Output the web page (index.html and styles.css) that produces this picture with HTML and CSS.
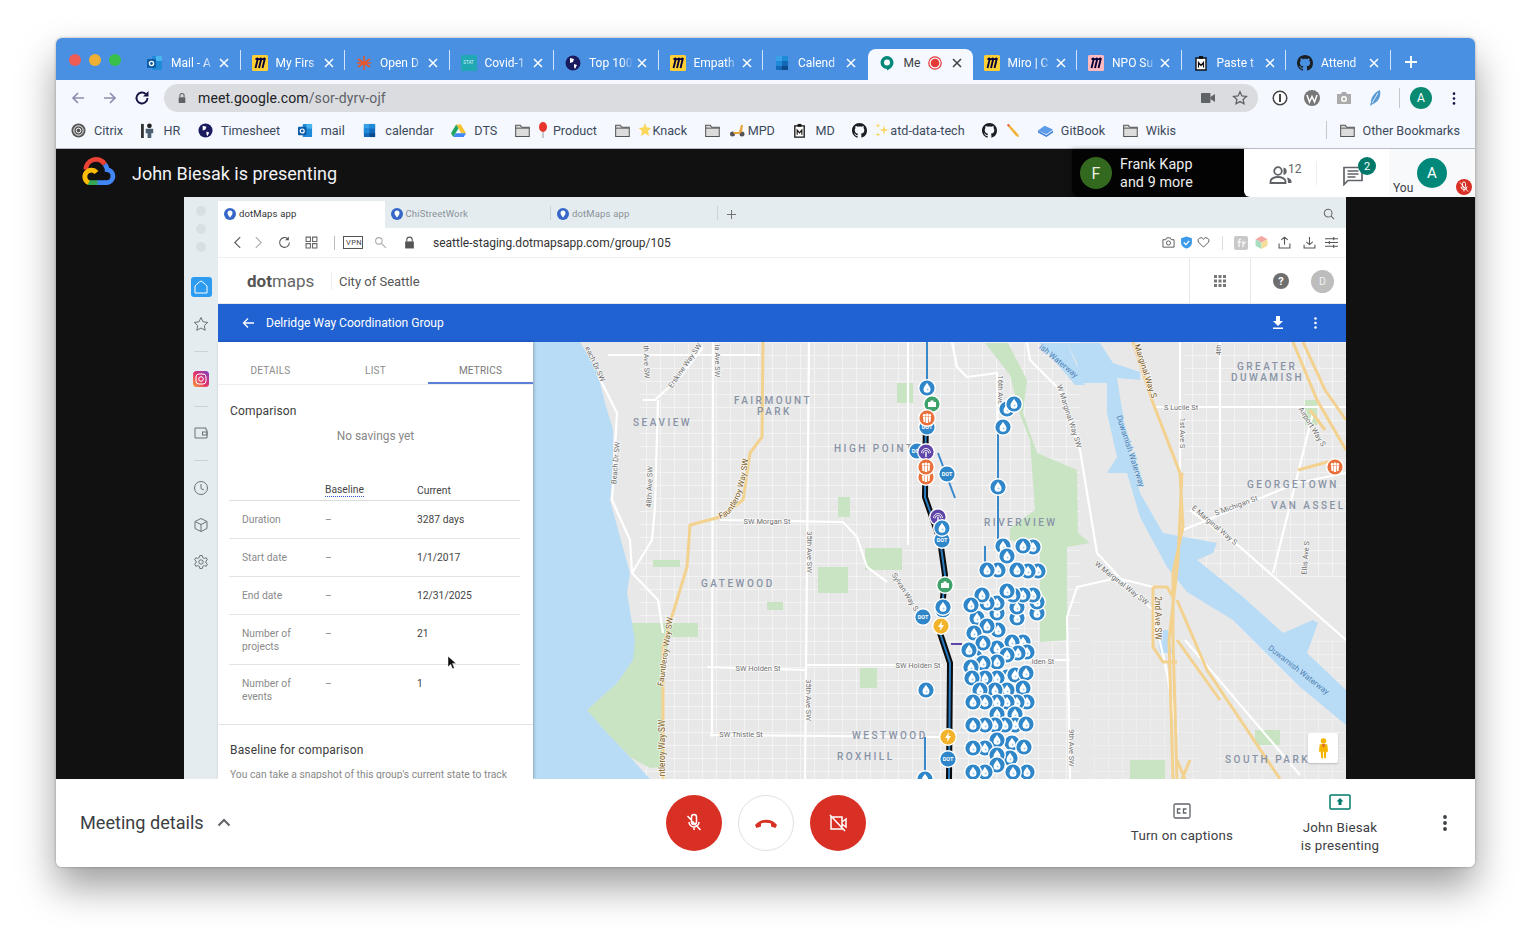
FILE: index.html
```html
<!DOCTYPE html>
<html lang="en">
<head>
<meta charset="utf-8">
<title>Meet</title>
<link rel="stylesheet" href="styles.css">
</head>
<body>
<svg class="defs" aria-hidden="true">
  <symbol id="x" viewBox="0 0 12 12"><path d="M2 2l8 8M10 2l-8 8" fill="none" stroke="currentColor" stroke-width="1.5"/></symbol>
  <symbol id="outlook" viewBox="0 0 16 16"><rect x="5" y="1" width="10" height="14" rx="1" fill="#1f8ad8"/><rect x="9" y="1" width="6" height="5" fill="#49b4ee"/><rect x="0" y="4" width="9" height="9" rx="1" fill="#0d5ca8"/><circle cx="4.5" cy="8.5" r="2.1" fill="none" stroke="#fff" stroke-width="1.3"/></symbol>
  <symbol id="miro" viewBox="0 0 16 16"><rect width="16" height="16" rx="1.5" fill="#ffcf33"/><path d="M6 3L3.500 13M9.500 3L7 13M13 3L10.500 13M3.500 4.500L6 3M7 4.500L9.500 3M10.500 4.500L13 3" fill="none" stroke="#050038" stroke-width="1.900"/></symbol>
  <symbol id="miropink" viewBox="0 0 16 16"><rect width="16" height="16" rx="1.5" fill="#ffb9bf"/><path d="M6 3L3.500 13M9.500 3L7 13M13 3L10.500 13M3.500 4.500L6 3M7 4.500L9.500 3M10.500 4.500L13 3" fill="none" stroke="#050038" stroke-width="1.900"/></symbol>
  <symbol id="burst" viewBox="0 0 16 16"><path d="M8 1v14M2 4l12 8M14 4L2 12M1 8h14" stroke="#e4572e" stroke-width="1.6"/></symbol>
  <symbol id="globe" viewBox="0 0 16 16"><circle cx="8" cy="8" r="7.5" fill="#1a1a5e"/><path d="M5 3l4 1-1 3-3 1zM9 9l3 1-2 4-1-2z" fill="#fff"/></symbol>
  <symbol id="cal" viewBox="0 0 16 16"><rect x="2" y="1" width="12" height="14" rx="1" fill="#1468b8"/><rect x="2" y="1" width="6" height="5" fill="#3aa0e8"/><rect x="8" y="1" width="6" height="5" fill="#1f8ad8"/><rect x="2" y="6" width="6" height="5" fill="#1f8ad8"/><rect x="8" y="11" width="6" height="4" fill="#0d4a8c"/></symbol>
  <symbol id="clip" viewBox="0 0 16 16"><path d="M3 3h10v12H3z" fill="#fff" stroke="#111" stroke-width="1.4"/><rect x="6" y="1" width="4" height="3" fill="#111"/><path d="M5.500 12.500v-5l2.500 3 2.500-3v5" fill="none" stroke="#111" stroke-width="1.200"/></symbol>
  <symbol id="gh" viewBox="0 0 16 16"><path fill="#1b1f23" d="M8 0C3.58 0 0 3.58 0 8c0 3.54 2.29 6.53 5.47 7.59.4.07.55-.17.55-.38 0-.19-.01-.82-.01-1.49-2.01.37-2.53-.49-2.69-.94-.09-.23-.48-.94-.82-1.13-.28-.15-.68-.52-.01-.53.63-.01 1.08.58 1.23.82.72 1.21 1.87.87 2.33.66.07-.52.28-.87.51-1.07-1.78-.2-3.64-.89-3.64-3.95 0-.87.31-1.59.82-2.15-.08-.2-.36-1.02.08-2.12 0 0 .67-.21 2.2.82.64-.18 1.32-.27 2-.27.68 0 1.36.09 2 .27 1.53-1.04 2.2-.82 2.2-.82.44 1.1.16 1.92.08 2.12.51.56.82 1.27.82 2.15 0 3.07-1.87 3.75-3.65 3.95.29.25.54.73.54 1.48 0 1.07-.01 1.93-.01 2.2 0 .21.15.46.55.38A8.013 8.013 0 0016 8c0-4.42-3.58-8-8-8z"/></symbol>
  <symbol id="folder" viewBox="0 0 16 16"><path d="M.7 2.500h5l1.500 2h8v9.800H.7z" fill="#dcdcdc" stroke="#555" stroke-width="1.100"/><path d="M.7 5.500h14.500" stroke="#555" stroke-width="1"/></symbol>
  <symbol id="pindot" viewBox="0 0 12 12"><circle cx="6" cy="6" r="6" fill="#3566c8"/><path d="M6 2.500a2.500 2.500 0 0 1 2.500 2.500C8.500 7 6 9.500 6 9.500S3.500 7 3.500 5A2.500 2.500 0 0 1 6 2.500z" fill="#fff"/></symbol>
</svg>

<main class="window">
  <header class="tabstrip">
    <div class="lights"><i class="light red"></i><i class="light amber"></i><i class="light green"></i></div>
    <div class="tab"><svg class="fav"><use href="#outlook"/></svg><span class="tname">Mail - A</span><svg class="tx"><use href="#x"/></svg></div>
    <div class="tab"><svg class="fav"><use href="#miro"/></svg><span class="tname">My Firs</span><svg class="tx"><use href="#x"/></svg></div>
    <div class="tab"><svg class="fav"><use href="#burst"/></svg><span class="tname">Open D</span><svg class="tx"><use href="#x"/></svg></div>
    <div class="tab"><span class="fav statfav">STAT</span><span class="tname">Covid-1</span><svg class="tx"><use href="#x"/></svg></div>
    <div class="tab"><svg class="fav"><use href="#globe"/></svg><span class="tname">Top 100</span><svg class="tx"><use href="#x"/></svg></div>
    <div class="tab"><svg class="fav"><use href="#miro"/></svg><span class="tname">Empath</span><svg class="tx"><use href="#x"/></svg></div>
    <div class="tab noline"><svg class="fav"><use href="#cal"/></svg><span class="tname">Calend</span><svg class="tx"><use href="#x"/></svg></div>
    <div class="tab active">
      <svg class="fav" viewBox="0 0 16 16"><path d="M8 1a6.500 6.500 0 0 1 6.500 6.500C14.500 11 11.500 14 8 15.500V14A6.500 6.500 0 0 1 8 1z" fill="#00897b"/><circle cx="8" cy="7.500" r="3" fill="#fff"/></svg>
      <span class="tname short">Me</span>
      <svg class="rec" viewBox="0 0 14 14"><circle cx="7" cy="7" r="6.200" fill="none" stroke="#e53935" stroke-width="1.200"/><circle cx="7" cy="7" r="4.300" fill="#e53935"/></svg>
      <svg class="tx"><use href="#x"/></svg>
    </div>
    <div class="tab"><svg class="fav"><use href="#miro"/></svg><span class="tname">Miro | C</span><svg class="tx"><use href="#x"/></svg></div>
    <div class="tab"><svg class="fav"><use href="#miropink"/></svg><span class="tname">NPO Su</span><svg class="tx"><use href="#x"/></svg></div>
    <div class="tab"><svg class="fav"><use href="#clip"/></svg><span class="tname">Paste t</span><svg class="tx"><use href="#x"/></svg></div>
    <div class="tab"><svg class="fav"><use href="#gh"/></svg><span class="tname">Attend</span><svg class="tx"><use href="#x"/></svg></div>
    <svg class="newtab" viewBox="0 0 14 14"><path d="M7 1v12M1 7h12" stroke="#fff" stroke-width="1.800"/></svg>
  </header>

  <nav class="toolbar">
    <svg class="navi" viewBox="0 0 16 16"><path d="M14 8H3M8 3L3 8l5 5" fill="none" stroke="#8d8fb0" stroke-width="1.700"/></svg>
    <svg class="navi" viewBox="0 0 16 16"><path d="M2 8h11M8 3l5 5-5 5" fill="none" stroke="#8d8fb0" stroke-width="1.700"/></svg>
    <svg class="navi" viewBox="0 0 16 16"><path d="M13.500 8a5.500 5.500 0 1 1-1.600-3.900" fill="none" stroke="#1a1446" stroke-width="1.900"/><path d="M14.500 1v5.500H9z" fill="#1a1446"/></svg>
    <div class="omnibox">
      <svg class="lock" viewBox="0 0 12 14"><path d="M3.500 6V4a2.500 2.500 0 0 1 5 0v2" fill="none" stroke="#5f6368" stroke-width="1.300"/><rect x="2" y="6" width="8" height="7" rx="1" fill="#5f6368"/></svg>
      <span class="url">meet.google.com<span class="urlpath">/sor-dyrv-ojf</span></span>
      <svg class="cam" viewBox="0 0 14 10"><rect width="9.500" height="10" rx="1" fill="#5f6368"/><path d="M9.500 4L14 1v8L9.500 6z" fill="#5f6368"/></svg>
      <svg class="star" viewBox="0 0 16 16"><path d="M8 1.800l1.900 4.100 4.500.5-3.300 3 .9 4.400L8 11.600l-4 2.200.9-4.400-3.300-3 4.500-.5z" fill="none" stroke="#5f6368" stroke-width="1.300"/></svg>
    </div>
    <div class="exts">
      <svg class="ext" viewBox="0 0 16 16"><circle cx="8" cy="8" r="6.800" fill="#fff" stroke="#444" stroke-width="1.500"/><rect x="7" y="4" width="2" height="8" fill="#444"/></svg>
      <svg class="ext" viewBox="0 0 16 16"><circle cx="8" cy="8" r="8" fill="#777"/><path d="M3 5l2.500 7L8 6.500l2.500 5.500L13 5" fill="none" stroke="#fff" stroke-width="1.500"/></svg>
      <svg class="ext" viewBox="0 0 16 16"><path d="M1 4h4l1-2h4l1 2h4v10H1z" fill="#aaa"/><circle cx="8" cy="9" r="3" fill="#fff"/><circle cx="8" cy="9" r="1.500" fill="#aaa"/></svg>
      <svg class="ext" viewBox="0 0 16 16"><path d="M12 0c1 5 0 11-7 14l-3 2 1-4C3 7 7 2 12 0z" fill="#5b9bd5"/><path d="M10 3L4 13" stroke="#fff" stroke-width=".8"/></svg>
      <i class="tsep"></i>
      <span class="avatar-a">A</span>
      <svg class="tdots" viewBox="0 0 4 16"><circle cx="2" cy="2" r="1.600"/><circle cx="2" cy="8" r="1.600"/><circle cx="2" cy="14" r="1.600"/></svg>
    </div>
  </nav>

  <nav class="bookmarks">
    <a class="bm"><svg class="bi" viewBox="0 0 16 16"><circle cx="8" cy="8" r="7.500" fill="#555"/><circle cx="8" cy="8" r="5" fill="none" stroke="#fff" stroke-width="1"/><circle cx="8" cy="8" r="2.500" fill="none" stroke="#fff" stroke-width="1"/></svg>Citrix</a>
    <a class="bm"><svg class="bi" viewBox="0 0 16 16"><rect x="0" y="1" width="3" height="15" fill="#333"/><circle cx="9" cy="3" r="2.500" fill="#222"/><path d="M5 6h8v5h-2v5H7v-5H5z" fill="#4b5f73"/></svg>HR</a>
    <a class="bm"><svg class="bi"><use href="#globe"/></svg>Timesheet</a>
    <a class="bm"><svg class="bi"><use href="#outlook"/></svg>mail</a>
    <a class="bm"><svg class="bi"><use href="#cal"/></svg>calendar</a>
    <a class="bm"><svg class="bi" viewBox="0 0 16 16"><path d="M5.500 1.500h5L16 11h-5z" fill="#f7c32e"/><path d="M5.500 1.500L0 11l2.500 4 5.500-9.500z" fill="#1fa463"/><path d="M2.500 15h11l2.500-4H5z" fill="#4285f4"/></svg>DTS</a>
    <a class="bm"><svg class="bi"><use href="#folder"/></svg><svg class="emoji" viewBox="0 0 10 16"><ellipse cx="5" cy="5" rx="4" ry="5" fill="#e8362c"/><path d="M5 10v6" stroke="#999"/></svg>Product</a>
    <a class="bm"><svg class="bi"><use href="#folder"/></svg><svg class="emoji tight" viewBox="0 0 14 16"><path d="M7 1l1.800 4.500L13.500 6 10 9l1 5-4-2.500L3 14l1-5L.5 6l4.700-.5z" fill="#fbd75b"/></svg>Knack</a>
    <a class="bm"><svg class="bi"><use href="#folder"/></svg><svg class="emoji wide" viewBox="0 0 16 14"><circle cx="3.500" cy="11" r="2.500" fill="#555"/><circle cx="13" cy="11" r="2.500" fill="#555"/><path d="M4 9h6l2-7h2l-1 7-3 2H5z" fill="#e8a33c"/></svg>MPD</a>
    <a class="bm"><svg class="bi"><use href="#clip"/></svg>MD</a>
    <a class="bm"><svg class="bi"><use href="#gh"/></svg><svg class="emoji tight" viewBox="0 0 14 16"><path d="M9 3l1 4 4 1-4 1-1 4-1-4-4-1 4-1zM3 1l.6 2 2 .6-2 .6L3 6l-.6-1.800-2-.6 2-.6zM3 10l.6 2 2 .6-2 .6L3 15l-.6-1.800-2-.6 2-.6z" fill="#f6d860"/></svg>atd-data-tech</a>
    <a class="bm"><svg class="bi"><use href="#gh"/></svg><svg class="bi" viewBox="0 0 16 16"><path d="M2 2l2-1 10 11 1 3-3-1z" fill="#f2b23a"/><path d="M2 2l2-1 1.500 1.700-2 1.200z" fill="#e06b5a"/></svg></a>
    <a class="bm"><svg class="bi" viewBox="0 0 16 16"><path d="M0 8l7-5 9 4-7 5z" fill="#5b9bea"/><path d="M0 8v2l9 5 7-5V8l-7 5z" fill="#3d7fd9"/></svg>GitBook</a>
    <a class="bm"><svg class="bi"><use href="#folder"/></svg>Wikis</a>
    <i class="bmsep"></i>
    <a class="bm"><svg class="bi"><use href="#folder"/></svg>Other Bookmarks</a>
  </nav>

  <section class="meet">
    <div class="topbar">
      <svg class="gc" viewBox="0 0 36 30"><path d="M26 25.500h-9" fill="none" stroke="#4285f4" stroke-width="5"/><path d="M25.500 6.500C27 8.500 28 10 28 12a6.800 6.800 0 0 1 0 13.500h-3" fill="none" stroke="#4285f4" stroke-width="5"/><path d="M18 25.500H8" fill="none" stroke="#34a853" stroke-width="5"/><path d="M6 12A10.500 10.500 0 0 1 25.500 6.500" fill="none" stroke="#ea4335" stroke-width="5"/><path d="M9 25.500A6.800 6.800 0 1 1 17 15" fill="none" stroke="#fbbc05" stroke-width="5"/></svg>
      <h1 class="presenting">John Biesak is presenting</h1>
      <div class="bubble">
        <span class="avatar-f">F</span>
        <span class="bubtext">Frank Kapp<br>and 9 more</span>
      </div>
      <div class="people">
        <div class="pcell pcount">
          <svg class="picon" viewBox="0 0 24 20"><circle cx="9" cy="6" r="3.800" fill="none" stroke="#5f6368" stroke-width="1.800"/><path d="M1.500 18v-1.500c0-3 4-4.500 7.500-4.500s7.500 1.500 7.500 4.500V18z" fill="none" stroke="#5f6368" stroke-width="1.800"/><path d="M14.500 2.500a3.800 3.800 0 0 1 0 7.500zM18 12.500c2.500.6 4.500 2 4.500 4V18H19c0-2-.5-4-1-5.500z" fill="#5f6368"/></svg>
          <span class="pnum">12</span>
        </div>
        <div class="pcell pchat">
          <svg class="chat" viewBox="0 0 20 20"><path d="M1 1.500h18v13H5L1 18.500z" fill="none" stroke="#5f6368" stroke-width="1.700"/><path d="M4.500 5h11M4.500 8h11M4.500 11h8" stroke="#5f6368" stroke-width="1.500"/></svg>
          <span class="badge">2</span>
        </div>
        <div class="pself">
          <span class="you">You</span>
          <span class="avatar-self">A</span>
          <span class="micbadge"><svg viewBox="0 0 12 12"><path d="M4.500 2.500a1.500 1.500 0 0 1 3 0v3a1.500 1.500 0 0 1-3 0zM3 5.500a3 3 0 0 0 6 0M6 8.500v2M2 1.500l8 9" fill="none" stroke="#fff" stroke-width="1"/></svg></span>
        </div>
      </div>
    </div>

    <div class="present">
      <aside class="rail">
        <div class="raildots"><i></i><i></i><i></i></div>
        <div class="railhome"><svg viewBox="0 0 16 16"><path d="M2 7c2-2 4-4 6-5 2 1 4 3 6 5v7H2z" fill="none" stroke="#fff" stroke-width="1"/></svg></div>
        <svg class="rico first" viewBox="0 0 16 16"><path d="M8 1.500l2 4.300 4.700.6-3.400 3.200.9 4.700L8 12l-4.200 2.300.9-4.700L1.300 6.400 6 5.800z" fill="none" stroke="#6b7378" stroke-width="1"/></svg>
        <i class="raildiv"></i>
        <svg class="rico" viewBox="0 0 16 16"><defs><linearGradient id="ig" x1="0" y1="1" x2="1" y2="0"><stop offset="0" stop-color="#f9a03c"/><stop offset=".5" stop-color="#e1306c"/><stop offset="1" stop-color="#7a3fc4"/></linearGradient></defs><rect width="16" height="16" rx="3.500" fill="url(#ig)"/><rect x="3" y="3" width="10" height="10" rx="3" fill="none" stroke="#fff"/><circle cx="8" cy="8" r="2.300" fill="none" stroke="#fff"/></svg>
        <i class="raildiv"></i>
        <svg class="rico" viewBox="0 0 16 16"><path d="M2 3h11v2h1v8H2z" fill="none" stroke="#6b7378"/><rect x="9.500" y="7" width="4.500" height="3" fill="none" stroke="#6b7378"/></svg>
        <i class="raildiv"></i>
        <svg class="rico" viewBox="0 0 16 16"><circle cx="8" cy="8" r="6.500" fill="none" stroke="#6b7378"/><path d="M8 4v4.500l3 1.500" fill="none" stroke="#6b7378"/></svg>
        <svg class="rico" viewBox="0 0 16 16"><path d="M8 1.500l6 3v7l-6 3-6-3v-7zM2 4.500l6 3 6-3M8 7.500v7" fill="none" stroke="#6b7378"/></svg>
        <svg class="rico" viewBox="0 0 16 16"><circle cx="8" cy="8" r="2.200" fill="none" stroke="#6b7378"/><path d="M6.800 1.500h2.400l.4 2 1.700.9 1.900-.7 1.200 2.100-1.500 1.300v1.800l1.500 1.300-1.200 2.100-1.900-.7-1.700.9-.4 2H6.800l-.4-2-1.700-.9-1.900.7-1.200-2.100 1.500-1.300V7.100L1.600 5.800l1.200-2.100 1.900.7 1.700-.9z" fill="none" stroke="#6b7378"/></svg>
      </aside>

      <div class="app">
        <div class="itabs">
          <div class="itab on"><svg class="pin"><use href="#pindot"/></svg>dotMaps app</div>
          <div class="itab"><svg class="pin"><use href="#pindot"/></svg>ChiStreetWork</div>
          <div class="itab"><svg class="pin"><use href="#pindot"/></svg>dotMaps app</div>
          <svg class="iplus" viewBox="0 0 10 10"><path d="M5 0v10M0 5h10" stroke="#666" stroke-width="1"/></svg>
          <svg class="isearch" viewBox="0 0 14 14"><circle cx="6" cy="6" r="4.500" fill="none" stroke="#666" stroke-width="1.200"/><path d="M9.500 9.500L13 13" stroke="#666" stroke-width="1.200"/></svg>
        </div>
        <div class="itool">
          <svg class="iicon" viewBox="0 0 12 12"><path d="M8.500 1L3.500 6l5 5" fill="none" stroke="#555"/></svg>
          <svg class="iicon nav2" viewBox="0 0 12 12"><path d="M3.500 1l5 5-5 5" fill="none" stroke="#aaa"/></svg>
          <svg class="iicon nav3" viewBox="0 0 12 12"><path d="M10.500 6A4.500 4.500 0 1 1 9 2.600" fill="none" stroke="#555"/><path d="M10 .5V4H6.500z" fill="#555"/></svg>
          <svg class="iicon nav4" viewBox="0 0 12 12"><path d="M1 1h4v4H1zM7 1h4v4H7zM1 7h4v4H1zM7 7h4v4H7z" fill="none" stroke="#666"/></svg>
          <i class="isep"></i>
          <span class="vpn">VPN</span>
          <svg class="iicon key" viewBox="0 0 12 12"><circle cx="4.500" cy="4.500" r="3" fill="none" stroke="#aaa"/><path d="M6.500 6.500L11 11" stroke="#aaa"/></svg>
          <svg class="iicon ilock" viewBox="0 0 10 12"><path d="M2.500 5V3.500a2.500 2.500 0 0 1 5 0V5" fill="none" stroke="#555"/><rect x="1" y="5" width="8" height="6.500" fill="#555"/></svg>
          <span class="iurl">seattle-staging.dotmapsapp.com/group/105</span>
          <div class="iright">
            <svg class="iicon r5" viewBox="0 0 14 12"><path d="M1 3h3l1-2h4l1 2h3v8H1z" fill="none" stroke="#555"/><circle cx="7" cy="6.500" r="2.200" fill="none" stroke="#555"/></svg>
            <svg class="iicon r4" viewBox="0 0 12 12"><path d="M6 .5l5 1.500v4c0 3-2.500 5-5 5.500C3.500 11 1 9 1 6V2z" fill="#3d9be9"/><path d="M3.500 6l2 2 3-3.500" fill="none" stroke="#fff" stroke-width="1.200"/></svg>
            <svg class="iicon r0" viewBox="0 0 14 12"><path d="M7 11L1.500 5.500A3 3 0 0 1 7 2.500a3 3 0 0 1 5.500 3z" fill="none" stroke="#555"/></svg>
            <i class="isep2"></i>
            <svg class="grayk" viewBox="0 0 14 14"><rect width="14" height="14" rx="2" fill="#c9c9c9"/><path d="M5 11V5a2 2 0 0 1 2-2M3.500 6h4M9 11V5M9 8l2.500-2" fill="none" stroke="#fff" stroke-width="1.100"/></svg>
            <svg class="iicon r10" viewBox="0 0 12 12"><path d="M6 0l5.500 3L6 6 .5 3z" fill="#f4a6a0"/><path d="M.5 3v6L6 12V6z" fill="#a7dfc0"/><path d="M11.500 3v6L6 12V6z" fill="#f5dd9a"/></svg>
            <svg class="iicon r12" viewBox="0 0 12 12"><path d="M6 8V1M3 3.500L6 1l3 2.500M1 7v4h10V7" fill="none" stroke="#555"/></svg>
            <svg class="iicon r9" viewBox="0 0 12 12"><path d="M6 1v7M3 5.500L6 8l3-2.500M1 8v3h10V8" fill="none" stroke="#555"/></svg>
            <svg class="iicon r0" viewBox="0 0 12 12"><path d="M0 2.500h12M0 6h12M0 9.500h12M8 1v3M4 4.500v3M8 8v3" stroke="#555"/></svg>
          </div>
        </div>
        <div class="dmhead">
          <span class="dmlogo"><b>dot</b>maps</span>
          <span class="dmcity">City of Seattle</span>
          <div class="dmcell grid"><svg viewBox="0 0 12 12"><path d="M0 0h3v3H0zM4.500 0h3v3h-3zM9 0h3v3H9zM0 4.500h3v3H0zM4.500 4.500h3v3h-3zM9 4.500h3v3H9zM0 9h3v3H0zM4.500 9h3v3h-3zM9 9h3v3H9z" fill="#777"/></svg></div>
          <div class="dmcell user"><span class="help">?</span><span class="userd">D</span></div>
        </div>
        <div class="bluebar">
          <svg class="barr" viewBox="0 0 12 12"><path d="M12 6H1.500M6 1.500L1.500 6 6 10.500" fill="none" stroke="#fff" stroke-width="1.300"/></svg>
          <span class="bartitle">Delridge Way Coordination Group</span>
          <svg class="bardl" viewBox="0 0 12 13"><path d="M4 0h4v5h3L6 10 1 5h3zM1 11.500h10V13H1z" fill="#fff"/></svg>
          <svg class="bardots" viewBox="0 0 3 12"><circle cx="1.500" cy="1.500" r="1.300" fill="#fff"/><circle cx="1.500" cy="6" r="1.300" fill="#fff"/><circle cx="1.500" cy="10.500" r="1.300" fill="#fff"/></svg>
        </div>
        <div class="work">
          <section class="panel">
            <div class="ptabs"><span class="ptab">DETAILS</span><span class="ptab">LIST</span><span class="ptab on">METRICS</span></div>
            <h2 class="ptitle">Comparison</h2>
            <p class="nosave">No savings yet</p>
            <div class="trow thead"><span></span><span class="dotted">Baseline</span><span>Current</span></div>
            <div class="trow"><span class="tl">Duration</span><span class="tb">–</span><span>3287 days</span></div>
            <div class="trow"><span class="tl">Start date</span><span class="tb">–</span><span>1/1/2017</span></div>
            <div class="trow"><span class="tl">End date</span><span class="tb">–</span><span>12/31/2025</span></div>
            <div class="trow multi"><span class="tl">Number of<br>projects</span><span class="tb">–</span><span>21</span></div>
            <div class="trow last"><span class="tl">Number of<br>events</span><span class="tb">–</span><span>1</span></div>
            <h2 class="ptitle second">Baseline for comparison</h2>
            <p class="snapshot">You can take a snapshot of this group's current state to track</p>
            <svg class="cursor" viewBox="0 0 10 14"><path d="M0 0l9 8H5l2 5-2 1-2-5-3 3z" fill="#111" stroke="#fff" stroke-width=".5"/></svg>
          </section>
          <div class="mapwrap">
            <svg class="map" viewBox="533 342 813 437">
              <defs>
                <pattern id="gridp" width="14" height="13" patternUnits="userSpaceOnUse" patternTransform="translate(2 4)"><path d="M0 .5H14M.5 0V13" stroke="#fff" stroke-width="1" opacity=".48"/></pattern>
                <g id="d"><circle r="9" fill="#fff"/><circle r="7.600" fill="#2f86c8"/><path d="M0-5.200C1.800-2.400 3.500-.8 3.500 1.300a3.500 3.500 0 0 1-7 0C-3.500-.8-1.800-2.400 0-5.200z" fill="#fff"/><circle cx=".6" cy="1.600" r="1" fill="#9fcbe9"/></g>
                <g id="o"><circle r="9" fill="#fff"/><circle r="7.600" fill="#e9703a"/><circle cx="-2.800" cy="-2.600" r="1.400" fill="#fff"/><circle cy="-3.200" r="1.400" fill="#fff"/><circle cx="2.800" cy="-2.600" r="1.400" fill="#fff"/><path d="M-4-1h2.300v5H-3.500zM-1.200-1.600h2.400V5h-2.400zM1.700-1H4L3.500 4H2z" fill="#fff"/></g>
                <g id="p"><circle r="9" fill="#fff"/><circle r="7.600" fill="#5f45a8"/><path d="M-4.500 1a4.500 4.500 0 0 1 9 0M-3 1.500a3 3 0 0 1 6 0" fill="none" stroke="#fff" stroke-width=".9"/><path d="M-.7 0h1.400v5h-1.400z" fill="#fff"/></g>
                <g id="g"><circle r="9" fill="#fff"/><circle r="7.600" fill="#3fa26b"/><path d="M-4-2h8v5h-8zM-1.500-3.500h3V-2h-3z" fill="#fff"/></g>
                <g id="y"><circle r="9" fill="#fff"/><circle r="7.600" fill="#f3b32a"/><path d="M1-5L-3 1h2.500L-1 5l4-6H.5z" fill="#fff"/></g>
                <g id="t"><circle r="9" fill="#fff"/><circle r="7.600" fill="#2f86c8"/><text class="dot" text-anchor="middle" y="2">DOT</text></g>
              </defs>
              <rect x="533" y="342" width="813" height="437" fill="#e8e8e8"/>
              <rect x="640" y="342" width="440" height="437" fill="url(#gridp)"/>
              <rect x="1185" y="342" width="161" height="235" fill="url(#gridp)"/>
              <rect x="1090" y="640" width="110" height="139" fill="url(#gridp)" opacity=".5"/>
              <rect x="1215" y="640" width="131" height="139" fill="url(#gridp)" opacity=".7"/>
              <g class="park">
                <path d="M632 623H698V637H670L662 673V767L650 768 630 757 607 733 587 710 617 683 633 660z"/>
                <path d="M897 383h16v20h-16zM818 567h30v26h-30zM860 668h17v20h-17zM865 548h37v22h-37zM838 497h12v20h-12zM767 602h16v8h-16zM653 560h27v7h-27zM1305 400h12v25h-12zM1130 760h35v19h-35zM1255 730h25v15h-25z"/>
                <path d="M985 343H1008L1027 380 1023 413 1037 453 1077 470 1078 533 1090 543 1067 547V640L1040 642V547L1010 540V528L1035 510 1030 440 1020 415 1010 375z"/>
              </g>
              <g class="water">
                <path d="M533 342H580L597 370 605 403 613 430V480L610 500 620 537 630 573 627 593 632 623 635 640 633 660 617 683 587 710 607 733 630 757 650 779H533z"/>
                <path d="M1067 343H1100L1113 363 1140 372V380L1117 378 1127 440 1140 493 1163 533 1217 543 1213 553 1197 560 1243 597 1283 633 1313 620 1318 623 1307 653 1346 690V725L1300 687 1233 620 1187 592 1167 567 1140 517 1127 473H1107L1117 457 1107 413V383H1080L1077 363z"/>
                <path d="M1040 343H1067L1085 385 1075 385zM1157 630H1168L1172 653H1160z"/>
              </g>
              <g class="road">
                <path d="M809 342L805 779M713 342L712 737M658 400L655 507 652 540 632 573M597 373L617 413 612 500 630 540 632 573 658 600 663 633M643 400H655L680 377 703 347M608 355H760M720 520L843 522 857 537 867 567 887 582M707 667L805 670M807 665H943M710 735L940 737"/>
                <path d="M1313 413L1273 573M1183 530L1297 483 1346 473M1190 510L1240 547 1346 640M1027 342L1030 360 1060 390 1080 450 1097 553 1120 578 1153 610 1167 673 1177 733M1070 779L1067 617 1077 587 1117 578 1153 587M1153 407H1346M1220 342V507M1180 342V473M952 342L957 367 967 377 997 373 998 450M1185 640L1300 775M1010 660H1070M908 342V545"/>
              </g>
              <g class="hwy">
                <path d="M763 342L762 437 750 453 743 500 720 517 690 525 687 567 673 613 663 647V779"/>
                <path d="M1133 342L1153 403 1180 473 1183 527 1173 573 1173 640 1177 779M1177 600L1207 670 1280 779M1182 473L1178 560 1169 640 1173 779M1293 342L1317 400 1346 450M1303 342L1325 390 1346 420M1153 587H1167L1173 597M1153 587V647L1163 662H1177M1177 640L1220 700M1298 470L1335 460M1310 410L1325 430M1177 760L1185 779M1190 760L1182 779"/>
              </g>
              <path class="bline" d="M927 342V385M998 430V540M938 453L955 498M925 737V777M985 546V570"/>
              <path class="broad" d="M926 410L925 497 940 540 945 575 940 633 950 663 949 779"/>
              <path class="bline2" d="M926 410L925 497 940 540 945 575 940 633 950 663 949 779"/>
              <path class="purp" d="M951 644H962"/>
              <g class="lbl">
                <text x="633" y="426">SEAVIEW</text><text x="734" y="404">FAIRMOUNT</text><text x="757" y="415">PARK</text><text x="834" y="452">HIGH POINT</text><text x="701" y="587">GATEWOOD</text><text x="852" y="739">WESTWOOD</text><text x="837" y="760">ROXHILL</text><text x="984" y="526">RIVERVIEW</text><text x="1237" y="370">GREATER</text><text x="1231" y="381">DUWAMISH</text><text x="1247" y="488">GEORGETOWN</text><text x="1271" y="509">VAN ASSEL</text><text x="1225" y="763">SOUTH PARK</text>
              </g>
              <g class="rl">
                <text transform="translate(593 365) rotate(65)">each Dr SW</text>
                <text transform="translate(618 463) rotate(-85)">Beach Dr SW</text>
                <text transform="translate(652 487) rotate(-88)">48th Ave SW</text>
                <text transform="translate(644 362) rotate(88)">th Ave SW</text>
                <text transform="translate(687 367) rotate(-55)">Erskine Way SW</text>
                <text transform="translate(715 361) rotate(90)">ia Ave SW</text>
                <text x="767" y="524">SW Morgan St</text>
                <text transform="translate(807 552) rotate(90)">35th Ave SW</text>
                <text transform="translate(806 700) rotate(90)">35th Ave SW</text>
                <text x="758" y="671">SW Holden St</text><text x="918" y="668">SW Holden St</text><text x="741" y="737">SW Thistle St</text>
                <text transform="translate(903 593) rotate(58)">Sylvan Way S</text>
                <text transform="translate(1067 417) rotate(72)">W Marginal Way SW</text>
                <text transform="translate(1120 585) rotate(38)">W Marginal Way SW</text>
                <text x="1181" y="410">S Lucile St</text>
                <text transform="translate(1180 433) rotate(90)">1st Ave S</text>
                <text transform="translate(1221 350) rotate(-90)">4th</text>
                <text transform="translate(998 393) rotate(90)">16th Ave S</text>
                <text transform="translate(1310 428) rotate(58)">Airport Way S</text>
                <text transform="translate(1237 508) rotate(-20)">S Michigan St</text>
                <text transform="translate(1213 527) rotate(40)">E Marginal Way S</text>
                <text transform="translate(1308 558) rotate(-85)">Ellis Ave S</text>
                <text transform="translate(1069 748) rotate(90)">9th Ave SW</text>
                <text x="1043" y="664">lden St</text>
              </g>
              <g class="rly">
                <path id="fpath" d="M720 519Q743 513 749 452" fill="none"/>
                <text text-anchor="start"><textPath href="#fpath">Fauntleroy Way SW</textPath></text>
                <text transform="translate(668 652) rotate(-82)">Fauntleroy Way SW</text>
                <text transform="translate(665 748) rotate(-90)">ntleroy Way SW</text>
                <text transform="translate(1143 372) rotate(72)">Marginal Way S</text>
                <text transform="translate(1155 618) rotate(90)">2nd Ave SW</text>
              </g>
              <g class="rlb">
                <text transform="translate(1057 363) rotate(40)">ish Waterway</text>
                <text transform="translate(1128 452) rotate(72)">Duwamish Waterway</text>
                <text transform="translate(1297 672) rotate(38)">Duwamish Waterway</text>
              </g>
              <use href="#t" x="927" y="427"/><use href="#d" x="927" y="388"/><use href="#g" x="932" y="404"/><use href="#o" x="927" y="418"/>
              <use href="#t" x="917" y="451"/><use href="#o" x="926" y="477"/><use href="#p" x="926" y="452"/><use href="#o" x="926" y="467"/><use href="#t" x="947" y="474"/>
              <use href="#p" x="938" y="517"/><use href="#t" x="942" y="540"/><use href="#d" x="942" y="528"/><use href="#g" x="945" y="585"/><use href="#t" x="923" y="617"/><use href="#d" x="943" y="610"/><use href="#d" x="943" y="607"/><use href="#y" x="941" y="626"/><use href="#y" x="948" y="737"/><use href="#t" x="948" y="759"/><use href="#d" x="926" y="690"/><use href="#d" x="925" y="779"/>
              <use href="#o" x="1335" y="467"/>
              <use href="#d" x="1007" y="409"/><use href="#d" x="1014" y="404"/><use href="#d" x="1003" y="427"/><use href="#d" x="998" y="487"/>
              <use href="#d" x="1003" y="546"/><use href="#d" x="1033" y="547"/><use href="#d" x="1023" y="546"/><use href="#d" x="1007" y="556"/>
              <use href="#d" x="1038" y="571"/><use href="#d" x="1028" y="571"/><use href="#d" x="1017" y="570"/><use href="#d" x="998" y="570"/><use href="#d" x="987" y="570"/>
              <use href="#d" x="1037" y="613"/><use href="#d" x="1037" y="602"/><use href="#d" x="1017" y="618"/><use href="#d" x="1017" y="607"/><use href="#d" x="997" y="613"/><use href="#d" x="977" y="618"/><use href="#d" x="1033" y="595"/><use href="#d" x="1023" y="595"/><use href="#d" x="1013" y="595"/><use href="#d" x="997" y="603"/><use href="#d" x="987" y="603"/><use href="#d" x="1007" y="591"/><use href="#d" x="982" y="595"/><use href="#d" x="971" y="605"/>
              <use href="#d" x="998" y="630"/><use href="#d" x="987" y="626"/><use href="#d" x="974" y="633"/>
              <use href="#d" x="1023" y="642"/><use href="#d" x="1012" y="642"/><use href="#d" x="997" y="648"/><use href="#d" x="983" y="643"/><use href="#d" x="975" y="657"/><use href="#d" x="1027" y="652"/><use href="#d" x="1018" y="653"/><use href="#d" x="1007" y="655"/><use href="#d" x="969" y="650"/>
              <use href="#d" x="997" y="662"/><use href="#d" x="983" y="663"/><use href="#d" x="971" y="667"/>
              <use href="#d" x="1007" y="677"/><use href="#d" x="1015" y="675"/><use href="#d" x="1026" y="673"/><use href="#d" x="997" y="678"/><use href="#d" x="985" y="678"/><use href="#d" x="972" y="678"/>
              <use href="#d" x="1023" y="688"/><use href="#d" x="1007" y="690"/><use href="#d" x="995" y="690"/><use href="#d" x="980" y="690"/>
              <use href="#d" x="1027" y="702"/><use href="#d" x="1017" y="702"/><use href="#d" x="1007" y="702"/><use href="#d" x="997" y="702"/><use href="#d" x="985" y="702"/><use href="#d" x="973" y="702"/>
              <use href="#d" x="1015" y="714"/><use href="#d" x="997" y="714"/><use href="#d" x="1015" y="725"/><use href="#d" x="1005" y="725"/><use href="#d" x="995" y="725"/><use href="#d" x="985" y="725"/><use href="#d" x="1026" y="724"/><use href="#d" x="973" y="725"/>
              <use href="#d" x="1012" y="743"/><use href="#d" x="997" y="740"/><use href="#d" x="1024" y="747"/><use href="#d" x="985" y="748"/><use href="#d" x="973" y="748"/>
              <use href="#d" x="1010" y="758"/><use href="#d" x="997" y="755"/><use href="#d" x="1027" y="772"/><use href="#d" x="1013" y="772"/><use href="#d" x="997" y="765"/><use href="#d" x="985" y="772"/><use href="#d" x="973" y="772"/>
            </svg>
            <div class="pegman"><svg viewBox="0 0 14 22"><circle cx="7" cy="3.500" r="3" fill="#f4b400"/><path d="M3 7h8l1 8h-2l-.5 7H7.500V15h-1v7H4.500L4 15H2z" fill="#f4b400"/><path d="M5 7h4L7 11z" fill="#d9602c"/></svg></div>
          </div>
        </div>
      </div>
    </div>
  </section>

  <footer class="bottom">
    <div class="fleft">
      <span class="details">Meeting details</span>
      <svg class="chev" viewBox="0 0 14 9"><path d="M1.500 7.500L7 2l5.500 5.500" fill="none" stroke="#5f6368" stroke-width="2"/></svg>
    </div>
    <div class="fcenter">
      <button class="cbtn red"><svg viewBox="0 0 20 20"><path d="M7.500 4a2.500 2.500 0 0 1 5 0v5a2.500 2.500 0 0 1-5 0zM5 9a5 5 0 0 0 10 0M10 14v3M3.500 3l13 14" fill="none" stroke="#fff" stroke-width="1.500"/></svg></button>
      <button class="cbtn hang"><svg viewBox="0 0 24 12"><path d="M1 8c5-7 17-7 22 0l-1.500 3-4.500-1.500V6.500c-3-1-7-1-10 0v3L2.500 11z" fill="#d93025"/></svg></button>
      <button class="cbtn red"><svg viewBox="0 0 20 20"><path d="M3 4h11v12H3zM14 9l4-3v8l-4-3M2 2l15 16" fill="none" stroke="#fff" stroke-width="1.500"/></svg></button>
    </div>
    <div class="fright">
      <div class="fact capt"><svg class="cc" viewBox="0 0 18 16"><rect x="1" y="1" width="16" height="14" rx="1.500" fill="none" stroke="#5f6368" stroke-width="1.300"/><path d="M7.500 6H4.500v4h3M13.500 6h-3v4h3" fill="none" stroke="#5f6368" stroke-width="1.300"/></svg><span>Turn on captions</span></div>
      <div class="fact pres"><svg class="up" viewBox="0 0 22 16"><rect x="1" y="1" width="20" height="14" rx="1" fill="none" stroke="#00796b" stroke-width="1.500"/><path d="M11 4l3.500 3.500h-2V11h-3V7.500h-2z" fill="#00796b"/></svg><span>John Biesak<br>is presenting</span></div>
      <svg class="fdots" viewBox="0 0 4 16"><circle cx="2" cy="2" r="1.900"/><circle cx="2" cy="8" r="1.900"/><circle cx="2" cy="14" r="1.900"/></svg>
    </div>
  </footer>
</main>
</body>
</html>
```

FILE: styles.css
```css
* { box-sizing: border-box; }
html, body { margin: 0; padding: 0; }
body { background: #fff; font-family: Roboto, "Liberation Sans", sans-serif; height: 941px; overflow: hidden; }
.defs { position: absolute; width: 0; height: 0; }
.window { margin: 38px 0 0 56px; width: 1419px; height: 829px; border-radius: 6px; overflow: hidden; display: flex; flex-direction: column; box-shadow: 0 20px 38px rgba(0,0,0,.38), 0 0 3px rgba(0,0,0,.3); background: #fff; }

/* tab strip */
.tabstrip { height: 42px; flex: none; background: #4a90e2; display: flex; align-items: flex-end; }
.lights { width: 80px; height: 42px; display: flex; gap: 8px; padding: 16px 0 0 13px; align-items: flex-start; flex: none; }
.light { width: 12px; height: 12px; border-radius: 50%; display: block; }
.light.red { background: #ee5c54; }
.light.amber { background: #f0b034; }
.light.green { background: #38c148; }
.tab { width: 104.5px; height: 31px; flex: none; display: flex; align-items: center; padding: 0 0 4px 11px; position: relative; color: #fff; font-size: 12px; }
.tab::after { content: ""; position: absolute; right: 0; top: 1px; height: 20px; width: 1px; background: rgba(255,255,255,.75); }
.tab.noline::after, .tab.active::after { display: none; }
.tab.active { background: #f5f8fe; color: #3c4043; border-radius: 8px 8px 0 0; width: 105px; }
.fav { width: 16px; height: 16px; flex: none; display: block; }
.statfav { background: #20a8b4; color: #d6f4f4; font-size: 4.5px; line-height: 16px; text-align: center; }
.tname { margin-left: 8px; width: 44px; white-space: nowrap; overflow: hidden; -webkit-mask-image: linear-gradient(to right, #000 74%, transparent); mask-image: linear-gradient(to right, #000 74%, transparent); }
.tname.short { width: 18px; margin-left: 9px; mask-image: none; -webkit-mask-image: none; }
.tx { width: 12px; height: 12px; margin-left: 3px; flex: none; color: #fff; }
.tab.active .tx { color: #3c4043; margin-left: 9px; }
.rec { width: 14px; height: 14px; flex: none; margin-left: 6px; }
.newtab { width: 14px; height: 14px; margin: 0 0 11px 13px; }

/* toolbar */
.toolbar { height: 36px; flex: none; background: #f5f8fe; display: flex; align-items: center; padding-left: 14px; }
.navi { width: 16px; height: 16px; margin-right: 16px; flex: none; }
.navi:nth-child(3) { margin-right: 14px; }
.omnibox { width: 1094px; height: 28px; background: #dadce0; border-radius: 14px; display: flex; align-items: center; padding-left: 13px; flex: none; }
.lock { width: 10px; height: 12px; flex: none; }
.url { margin-left: 11px; font-size: 14px; color: #202124; letter-spacing: .1px; }
.urlpath { color: #5f6368; }
.cam { width: 14px; height: 10px; margin-left: auto; }
.star { width: 16px; height: 16px; margin: 0 10px 0 17px; }
.exts { display: flex; align-items: center; padding-left: 14px; }
.ext { width: 16px; height: 16px; margin-right: 16px; flex: none; }
.tsep { width: 1px; height: 20px; background: #c4c7cc; margin: 0 10px 0 -1px; }
.avatar-a { width: 22px; height: 22px; border-radius: 50%; background: #0b8a72; color: #fff; font-size: 12px; display: flex; align-items: center; justify-content: center; }
.tdots { width: 4px; height: 13px; margin-left: 20px; fill: #1a1446; }

/* bookmarks */
.bookmarks { height: 33px; flex: none; background: #f5f8fe; border-bottom: 1px solid #b8bcc4; display: flex; align-items: center; padding: 0 15px 4px 15px; gap: 17.600px; font-size: 12.600px; color: #3c4a5c; }
.bm { display: flex; align-items: center; gap: 8px; white-space: nowrap; }
.bi { width: 15px; height: 15px; flex: none; }
.emoji { width: 10px; height: 16px; flex: none; margin: 0 -3px 0 0; }
.emoji.tight { width: 14px; margin-right: -7px; }
.emoji.wide { width: 16px; height: 14px; margin-left: 1px; margin-right: -5px; }
.bmsep { width: 1px; height: 18px; background: #c4c7cc; margin-left: auto; margin-right: -5px; }

/* meet */
.meet { flex: 1; min-height: 0; background: #111; display: flex; flex-direction: column; }
.topbar { height: 48px; flex: none; display: flex; align-items: stretch; padding-left: 24px; color: #fff; }
.gc { width: 35px; height: 29px; align-self: center; margin-top: -1px; overflow: visible; }
.presenting { font-size: 18px; font-weight: 400; margin: 0 0 0 17px; align-self: center; color: #f1f3f4; flex: 1; }
.bubble { width: 172px; background: #030303; border-radius: 0 0 0 8px; display: flex; align-items: center; padding-left: 8px; box-shadow: 0 2px 6px rgba(0,0,0,.5); }
.avatar-f { width: 32px; height: 32px; border-radius: 50%; background: #33691e; display: flex; align-items: center; justify-content: center; font-size: 16px; color: #e8efe0; }
.bubtext { font-size: 14.300px; line-height: 18px; margin-left: 8px; color: #eee; letter-spacing: .1px; }
.people { width: 231px; background: #fff; border-radius: 0 0 0 6px; display: flex; position: relative; color: #5f6368; }
.pcell { display: flex; position: relative; }
.pcount { width: 73px; padding: 16px 0 0 25px; }
.pcount::after { content: ""; position: absolute; right: 0; top: 12px; height: 24px; width: 1px; background: #eceff1; }
.picon { width: 24px; height: 20px; }
.pnum { font-size: 12px; margin: -3px 0 0 -5px; color: #5f6368; }
.pchat { width: 72px; padding: 17px 0 0 26px; }
.chat { width: 20px; height: 20px; }
.badge { position: absolute; left: 41px; top: 8px; width: 18px; height: 18px; border-radius: 50%; background: #00796b; color: #fff; font-size: 11px; display: flex; align-items: center; justify-content: center; }
.pself { flex: 1; background: #f8f9fa; position: relative; }
.you { position: absolute; left: 4px; top: 32px; font-size: 12px; color: #3c4043; }
.avatar-self { position: absolute; left: 28px; top: 9px; width: 30px; height: 30px; border-radius: 50%; background: #00897b; color: #fff; font-size: 15px; display: flex; align-items: center; justify-content: center; }
.micbadge { position: absolute; left: 67px; top: 30px; width: 16px; height: 16px; border-radius: 50%; background: #d93025; padding: 2px; display: flex; }
.micbadge svg { width: 12px; height: 12px; }

/* presented screen */
.present { width: 1162px; flex: 1; min-height: 0; margin-left: 128px; display: flex; overflow: hidden; background: #fff; }
.rail { width: 34px; flex: none; background: #e4ecf0; display: flex; flex-direction: column; align-items: center; }
.raildots { display: flex; flex-direction: column; gap: 8px; margin-top: 9px; }
.raildots i { width: 10px; height: 10px; border-radius: 50%; background: #d8dfe3; display: block; }
.railhome { width: 21px; height: 20px; border-radius: 3px; background: #2d9cf0; margin-top: 25px; padding: 2px; display: flex; }
.railhome svg { width: 16px; height: 16px; margin-left: .5px; }
.rico { width: 16px; height: 16px; margin-top: 21px; flex: none; }
.rico.first { margin-top: 19px; }
.raildiv { width: 14px; height: 1px; background: #c9d3d8; margin-top: 19px; display: block; }
.rail .raildiv + .rico { margin-top: 18.500px; }
.app { flex: 1; min-width: 0; display: flex; flex-direction: column; }
.itabs { height: 31px; flex: none; background: #e4ecf0; display: flex; align-items: flex-end; font-size: 9.500px; color: #8a9298; }
.itab { width: 166.500px; height: 27px; display: flex; align-items: center; padding: 0 0 2px 6px; gap: 3px; position: relative; letter-spacing: .15px; }
.itab.on { background: #fff; color: #333; }
.itab:nth-child(n+2)::after { content: ""; position: absolute; right: 0; top: 5px; width: 1px; height: 14px; background: #cbd3d8; }
.pin { width: 12px; height: 12px; flex: none; }
.iplus { width: 9px; height: 9px; margin: 0 0 9px 9px; }
.isearch { width: 12px; height: 12px; margin: 0 11px 8px auto; }
.itool { height: 30px; flex: none; background: #fff; border-bottom: 1px solid #eef1f3; display: flex; align-items: center; padding-left: 12.500px; }
.iicon { width: 13px; height: 13px; flex: none; }
.nav2 { margin-left: 8px; }
.nav3 { margin-left: 13px; }
.nav4 { margin-left: 14px; }
.isep { width: 1px; height: 14px; background: #bbb; margin: 0 8px 0 16.500px; }
.vpn { border: 1px solid #555; font-size: 7.500px; color: #444; padding: 1.500px 2px; letter-spacing: .4px; line-height: 7.500px; width: 20px; text-align: center; white-space: nowrap; }
.key { margin-left: 11px; }
.ilock { margin-left: 16px; }
.iurl { font-size: 12px; color: #333; white-space: nowrap; margin-left: 17px; padding-top: 1px; }
.iright { margin-left: auto; display: flex; align-items: center; padding-right: 8.500px; }
.r5 { margin-right: 5px; }
.r4 { margin-right: 4px; }
.r10 { margin-right: 10px; }
.r12 { margin-right: 12px; }
.r9 { margin-right: 9px; }
.isep2 { width: 1px; height: 14px; background: #ddd; margin: 0 11px 0 12px; }
.grayk { width: 14px; height: 14px; margin-right: 6.500px; flex: none; }
.dmhead { height: 46px; flex: none; display: flex; align-items: center; background: #fff; padding-left: 29px; box-shadow: inset 0 -1px 0 #e6e8ea; }
.dmlogo { font-size: 17px; color: #666; width: 84px; }
.dmlogo b { color: #555; }
.dmcity { font-size: 13px; color: #555; border-left: 1px solid #eee; padding-left: 7px; height: 18px; line-height: 19px; flex: 1; }
.dmcell { height: 46px; display: flex; align-items: center; border-left: 1px solid #e6e8ea; }
.dmcell.grid { width: 61px; justify-content: center; }
.dmcell.grid svg { width: 12px; height: 12px; }
.dmcell.user { width: 96px; }
.help { width: 16px; height: 16px; border-radius: 50%; background: #6e6e6e; color: #fff; font-size: 11px; font-weight: 700; display: flex; align-items: center; justify-content: center; margin-left: 22px; }
.userd { width: 23px; height: 23px; border-radius: 50%; background: #bdbdbd; color: #f0f0f0; font-size: 10.500px; display: flex; align-items: center; justify-content: center; margin-left: 22px; }
.bluebar { height: 38px; flex: none; background: #2062d2; display: flex; align-items: center; padding: 0 0 1px 24px; color: #fff; }
.barr { width: 12px; height: 12px; }
.bartitle { font-size: 12.100px; margin-left: 12px; flex: 1; }
.bardl { width: 12px; height: 13px; }
.bardots { width: 3px; height: 12px; margin: 0 29px 0 30px; }
.work { flex: 1; min-height: 0; display: flex; }

/* left panel */
.panel { width: 315px; flex: none; background: #fff; position: relative; z-index: 1; box-shadow: 1px 0 3px rgba(0,0,0,.25); color: #444; overflow: hidden; }
.ptabs { height: 43px; display: flex; border-bottom: 1px solid #eee; }
.ptab { flex: 1; display: flex; align-items: center; justify-content: center; font-size: 10px; color: #8c8c8c; letter-spacing: .2px; padding-top: 14px; }
.ptab.on { box-shadow: inset 0 -2px 0 #5b7fd4; color: #777; }
.ptitle { font-size: 12px; font-weight: 400; margin: 19px 0 0 12px; line-height: 14px; color: #3c3c3c; letter-spacing: .15px; }
.nosave { margin: 11px 0 0; text-align: center; font-size: 11.900px; line-height: 14px; color: #888; height: 55px; }
.trow { margin: 0 13px 0 11px; display: grid; grid-template-columns: 96px 92px 1fr; padding: 12px 0 12px 0; border-bottom: 1px solid #e4e4e4; font-size: 10.300px; line-height: 13px; color: #444; }
.thead { padding: 0 0 3px 0; height: 17px; border-bottom-color: #ddd; }
.tl { padding-left: 13px; color: #8a8a8a; }
.tb { color: #888; }
.dotted { justify-self: start; border-bottom: 1px dotted #3355cc; line-height: 12px; height: 13px; }
.trow.multi { padding-bottom: 11px; }
.trow.last { border-bottom: 0; padding-bottom: 21px; }
.ptitle.second { border-top: 1px solid #e4e4e4; padding-top: 18px; margin: 0; padding-left: 12px; }
.snapshot { margin: 11px 0 0 12px; font-size: 10.300px; line-height: 13px; color: #888; white-space: nowrap; }
.cursor { position: absolute; left: 230px; top: 314px; width: 9px; height: 13px; }

/* map */
.mapwrap { flex: 1; min-width: 0; position: relative; overflow: hidden; }
.map { display: block; width: 813px; height: 437px; }
.park path { fill: #c8e4c2; }
.water path { fill: #b8dcf6; }
.road path { fill: none; stroke: #fff; stroke-width: 2.200px; stroke-linejoin: round; }
.hwy path { fill: none; stroke: #f3d18f; stroke-width: 3px; stroke-linejoin: round; }
.bline { fill: none; stroke: #3a88cc; stroke-width: 2px; }
.broad { fill: none; stroke: #0c0c0c; stroke-width: 6px; stroke-linejoin: round; }
.bline2 { fill: none; stroke: #2a7cc0; stroke-width: 2px; }
.purp { stroke: #5f45a8; stroke-width: 2px; }
.lbl text { font-family: Roboto, sans-serif; font-size: 10px; font-weight: 500; letter-spacing: 2.500px; fill: #8893a6; }
.rl text, .rly text, .rlb text { font-family: Roboto, sans-serif; font-size: 7.400px; text-anchor: middle; paint-order: stroke; stroke: rgba(255,255,255,.75); stroke-width: 1.500px; }
.rl text { fill: #6d6d6d; }
.rly text { fill: #7a5a22; font-size: 8.200px; }
.rlb text { fill: #4f82b5; stroke: rgba(185,220,246,.8); font-size: 8px; }
.rly text[text-anchor="start"] { text-anchor: start; }
.dot { font-family: Roboto, sans-serif; font-size: 5.500px; font-weight: 700; fill: #fff; }
.pegman { position: absolute; left: 775px; top: 391px; width: 30px; height: 30px; background: #fff; border-radius: 2px; display: flex; align-items: center; justify-content: center; box-shadow: 0 1px 2px rgba(0,0,0,.2); }
.pegman svg { width: 13px; height: 22px; }

/* footer */
.bottom { height: 88px; flex: none; background: #fff; display: grid; grid-template-columns: 1fr auto 1fr; align-items: center; position: relative; z-index: 2; }
.fleft { display: flex; align-items: center; padding: 0 0 2px 24px; }
.details { font-size: 18.100px; color: #3c4043; }
.chev { width: 14px; height: 9px; margin-left: 13px; }
.fcenter { display: flex; gap: 16px; }
.cbtn { width: 56px; height: 56px; border-radius: 50%; border: 1px solid #e0e0e0; background: #fff; display: flex; align-items: center; justify-content: center; padding: 0; }
.cbtn.red { background: #d93025; border: 0; }
.cbtn svg { width: 20px; height: 20px; }
.cbtn.hang svg { width: 24px; height: 12px; }
.fright { display: flex; align-items: center; justify-content: flex-end; height: 88px; padding: 2px 28px 0 0; }
.fact { display: flex; flex-direction: column; align-items: center; font-size: 13.300px; color: #3c4043; line-height: 18px; text-align: center; letter-spacing: .2px; white-space: nowrap; }
.fact.capt { width: 104px; }
.cc { width: 18px; height: 16px; margin-bottom: 8px; }
.fact.pres { width: 90px; margin: 0 58px 0 61px; }
.up { width: 22px; height: 16px; margin-bottom: 9px; }
.fdots { width: 4px; height: 16px; fill: #3c4043; flex: none; margin-top: -2px; }
```
